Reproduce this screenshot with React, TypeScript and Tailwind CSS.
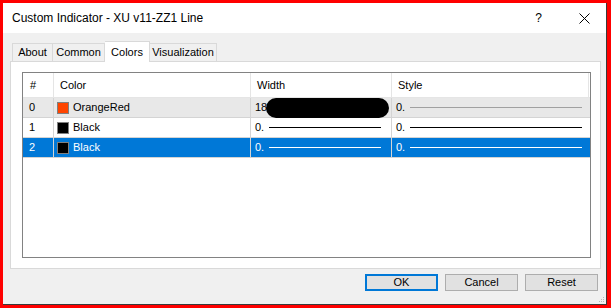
import React from "react";

const font = { fontFamily: '"Liberation Sans", Arial, sans-serif' };

function Row({
  idx,
  swatch,
  name,
  bg,
  text,
  widthContent,
  styleLine,
}: {
  idx: string;
  swatch: string;
  name: string;
  bg: string;
  text: string;
  widthContent: React.ReactNode;
  styleLine: string;
}) {
  return (
    <div className={`flex h-[20px] border-b border-[#d4d4d4] ${bg} ${text}`}>
      <div className="w-[31px] shrink-0 border-r border-[#d4d4d4] pl-[6px] flex items-center">{idx}</div>
      <div className="w-[197px] shrink-0 border-r border-[#d4d4d4] pl-[3px] flex items-center">
        <div className={`w-[12px] h-[12px] border border-[#808080] ${swatch}`} />
        <span className="ml-[4px]">{name}</span>
      </div>
      <div className="w-[141px] shrink-0 border-r border-[#d4d4d4] pl-[4px] flex items-center">{widthContent}</div>
      <div className="w-[197px] shrink-0 pl-[4px] flex items-center">
        <span>0.</span>
        <div className={`ml-[5px] w-[172px] h-[1px] ${styleLine}`} />
      </div>
    </div>
  );
}

export default function App() {
  return (
    <div className="w-[611px] h-[308px] bg-[#ff0000] pt-[3px] pl-[3px] text-[11px] text-black" style={font}>
      <div className="w-[604px] h-[302px] bg-[#f0f0f0] border-r border-b border-[#3a3a3a] flex flex-col relative">
        {/* title bar */}
        <div className="h-[30px] bg-white flex items-center pl-[9px] shrink-0">
          <span className="text-[12px]">Custom Indicator - XU v11-ZZ1 Line</span>
          <span className="ml-auto mr-[37px] text-[12px]">?</span>
          <svg width="11" height="11" viewBox="0 0 11 11" className="mr-[16px]">
            <path d="M0.5 0.5 L10.5 10.5 M10.5 0.5 L0.5 10.5" stroke="#000" strokeWidth="1" />
          </svg>
        </div>
        {/* tabs */}
        <div className="flex items-end h-[28px] pl-[9px] shrink-0">
          <div className="w-[41px] h-[18px] border border-b-0 border-[#d9d9d9] flex items-center justify-center">About</div>
          <div className="w-[52px] h-[18px] border border-b-0 border-l-0 border-[#d9d9d9] flex items-center justify-center">Common</div>
          <div className="w-[45px] h-[21px] border border-b-0 border-l-0 border-[#d9d9d9] bg-white flex items-start pt-[2px] justify-center -mb-[1px] relative z-10">Colors</div>
          <div className="w-[67px] h-[18px] border border-b-0 border-l-0 border-[#d9d9d9] flex items-center justify-center">Visualization</div>
        </div>
        {/* panel */}
        <div className="ml-[7px] w-[591px] h-[208px] bg-white border border-[#d9d9d9] pl-[11px] pt-[10px] shrink-0">
          <div className="w-[569px] h-[186px] border border-[#828282] bg-white">
            <div className="flex h-[25px] border-b border-[#e5e5e5]">
              <div className="w-[31px] border-r border-[#e5e5e5] pl-[7px] flex items-center">#</div>
              <div className="w-[197px] border-r border-[#e5e5e5] pl-[6px] flex items-center">Color</div>
              <div className="w-[141px] border-r border-[#e5e5e5] pl-[6px] flex items-center">Width</div>
              <div className="w-[197px] border-r border-[#e5e5e5] pl-[6px] flex items-center">Style</div>
            </div>
            <Row
              idx="0"
              swatch="bg-[#ff4500]"
              name="OrangeRed"
              bg="bg-[#e8e8e8]"
              text="text-black"
              widthContent={
                <>
                  <span>18</span>
                  <div className="-ml-[1px] w-[123px] h-[20px] rounded-[10px] bg-black" />
                </>
              }
              styleLine="bg-[#a0a0a0]"
            />
            <Row
              idx="1"
              swatch="bg-black"
              name="Black"
              bg="bg-white"
              text="text-black"
              widthContent={
                <>
                  <span>0.</span>
                  <div className="ml-[5px] w-[112px] h-[1px] bg-black" />
                </>
              }
              styleLine="bg-black"
            />
            <Row
              idx="2"
              swatch="bg-black"
              name="Black"
              bg="bg-[#0078d7]"
              text="text-white"
              widthContent={
                <>
                  <span>0.</span>
                  <div className="ml-[5px] w-[112px] h-[1px] bg-white" />
                </>
              }
              styleLine="bg-white"
            />
          </div>
        </div>
        {/* buttons */}
        <div className="flex justify-end gap-[7px] pr-[8px] mt-[5px]">
          <button className="w-[73px] h-[17px] bg-[#e1e1e1] border-2 border-[#0078d7] flex items-center justify-center">OK</button>
          <button className="w-[73px] h-[17px] bg-[#e1e1e1] border border-[#adadad] flex items-center justify-center">Cancel</button>
          <button className="w-[73px] h-[17px] bg-[#e1e1e1] border border-[#adadad] flex items-center justify-center">Reset</button>
        </div>
        {/* resize grip */}
        <svg width="6" height="6" viewBox="0 0 6 6" className="absolute right-[1px] bottom-[1px]">
          <rect x="4" y="0" width="1" height="1" fill="#b8b8b8" />
          <rect x="2" y="2" width="1" height="1" fill="#b8b8b8" />
          <rect x="4" y="2" width="1" height="1" fill="#b8b8b8" />
          <rect x="0" y="4" width="1" height="1" fill="#b8b8b8" />
          <rect x="2" y="4" width="1" height="1" fill="#b8b8b8" />
          <rect x="4" y="4" width="1" height="1" fill="#b8b8b8" />
        </svg>
      </div>
    </div>
  );
}
